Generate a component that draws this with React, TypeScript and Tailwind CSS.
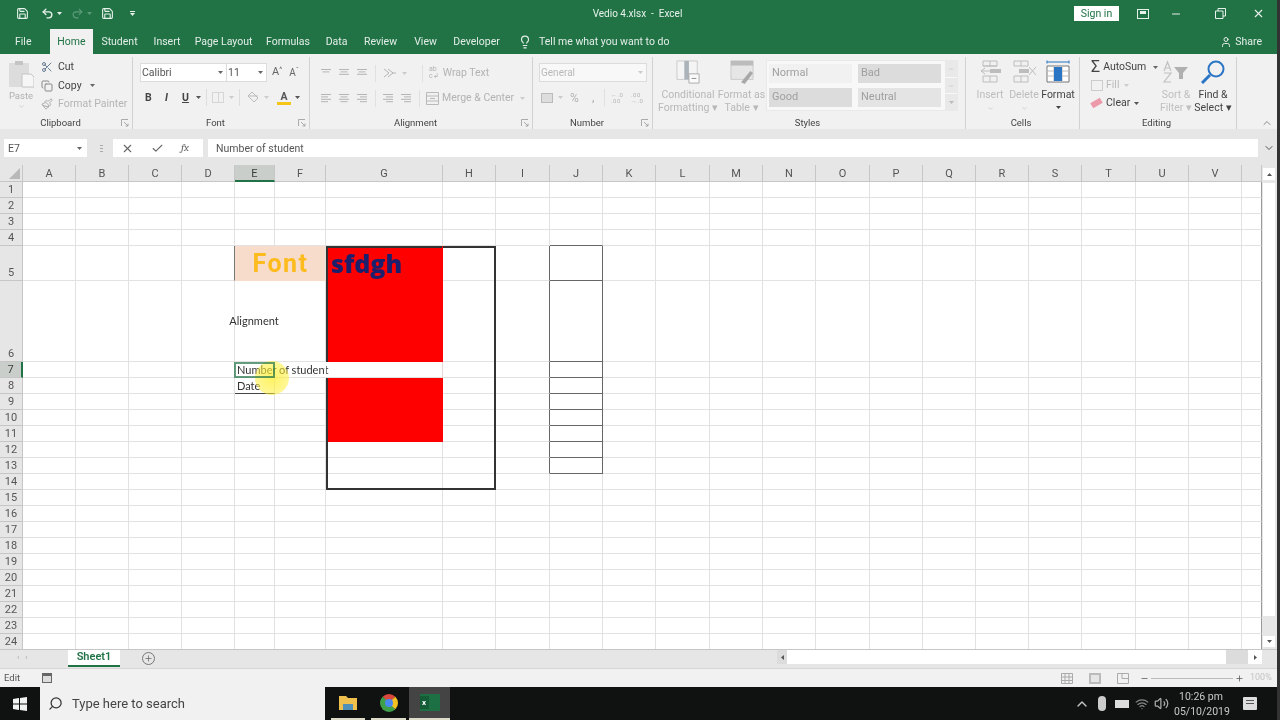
import React from 'react';
import { ChevronDown, ChevronUp, Check, Copy, Lightbulb, Minus, Paintbrush, Plus, Redo2, Save, Scissors, Search, Undo2, User, Volume2, Wifi, X } from 'lucide-react';

const COLS = ['A','B','C','D','E','F','G','H','I','J','K','L','M','N','O','P','Q','R','S','T','U','V','W'];
const ROWS = Array.from({ length: 24 }, (_, i) => i + 1);

const TABS = [
  ['Student', 'w-[33px] ml-[10px]'],
  ['Insert', 'w-[24px] ml-[19px]'],
  ['Page Layout', 'w-[53px] ml-[18px]'],
  ['Formulas', 'w-[40px] ml-[18px]'],
  ['Data', 'w-[21px] ml-[18px]'],
  ['Review', 'w-[31px] ml-[18px]'],
  ['View', 'w-[21px] ml-[19px]'],
  ['Developer', 'w-[45px] ml-[18px]'],
];

const RED_L = 'bg-[#ff0000] border-r-[#ff0000] border-b-0 shadow-[inset_2px_0_0_#333]';
const BOX_L = 'border-b-0 shadow-[inset_2px_0_0_#333,inset_0_-1px_0_#e2e2e2]';
const BOX_R = 'border-r-0 border-b-0 shadow-[inset_-2px_0_0_#333,inset_0_-1px_0_#e2e2e2]';

// per-cell overrides, keyed by address
const CELLS: Record<string, { cls?: string; body?: React.ReactNode }> = {
  D5: { cls: 'border-r-[#777]' },
  E5: { cls: 'relative z-10 bg-[#f8dccb] border-r-[#f8dccb] border-b-[#f8dccb]', body: <span className="block w-[91px] text-center font-['Roboto'] text-[25px] font-bold leading-[36px] tracking-[1.5px] text-[#fdbb1e]">Font</span> },
  F5: { cls: 'bg-[#f8dccb] border-b-[#f8dccb]' },
  G5: { cls: 'bg-[#ff0000] border-r-[#ff0000] border-b-0 shadow-[inset_2px_2px_0_#333]', body: <span className="block pl-[5px] font-['Open_Sans'] text-[25px] font-extrabold leading-[34px] text-[#1c1f6b]">sfdgh</span> },
  H5: { cls: 'border-r-0 border-b-0 shadow-[inset_-2px_2px_0_#333,inset_0_-1px_0_#e2e2e2]' },
  E6: { cls: 'border-r-white', body: <span className="flex h-full w-[38px] items-center justify-center whitespace-nowrap pt-[1px]">Alignment</span> },
  G6: { cls: RED_L },
  H6: { cls: BOX_R },
  E7: { cls: 'border-r-white', body: <span className="block whitespace-nowrap pl-[2px] leading-[15px]">Number of student</span> },
  F7: { cls: 'border-r-white' },
  G7: { cls: 'border-r-[#e8d8d8]' },
  H7: { cls: BOX_R },
  E8: { cls: 'border-b-[#444]', body: <span className="block whitespace-nowrap pl-[2px] leading-[15px]">Date</span> },
  G14: { cls: 'border-r-0 border-b-0 shadow-[inset_2px_-2px_0_#333,inset_-1px_0_0_#e2e2e2]' },
  H14: { cls: 'border-r-0 border-b-0 shadow-[inset_-2px_-2px_0_#333]' },
};
[8, 9, 10, 11].forEach((r) => { CELLS[`G${r}`] = { cls: RED_L }; });
[12, 13].forEach((r) => { CELLS[`G${r}`] = { cls: BOX_L }; });
[8, 9, 10, 11, 12, 13].forEach((r) => { CELLS[`H${r}`] = { cls: BOX_R }; });
[5, 6, 7, 8, 9, 10, 11, 12, 13].forEach((r) => {
  CELLS[`I${r}`] = { cls: 'border-r-[#666]' };
  CELLS[`J${r}`] = { cls: 'border-r-[#666] border-b-[#666]' };
});
CELLS.J4 = { cls: 'border-b-[#666]' };

function Launcher() {
  return (
    <svg width="8" height="8" viewBox="0 0 8 8" className="shrink-0 text-[#999]">
      <path d="M0.5 0.5H7M0.5 0.5V7M3 3l4 4M7 4.5V7H4.5" fill="none" stroke="currentColor" strokeWidth="0.8" />
    </svg>
  );
}

function Caret({ cls = 'text-[#999]' }: { cls?: string }) {
  return <svg width="5" height="3" viewBox="0 0 5 3" className={`shrink-0 ${cls}`}><path d="M0 0h5L2.5 3z" fill="currentColor" /></svg>;
}

function Group({ label, launcher, cls, children }: { label: string; launcher?: boolean; cls: string; children: React.ReactNode }) {
  return (
    <div className={`flex h-[72px] shrink-0 flex-col border-r border-[#d2d2d2] ${cls}`}>
      <div className="flex min-h-0 flex-1">{children}</div>
      <div className="flex h-[15px] items-center pr-[3px] pt-[2px] text-[9.5px] leading-none text-[#444]">
        <span className="flex-1 text-center">{label}</span>
        {launcher && <Launcher />}
      </div>
    </div>
  );
}

function Lines({ rows, align }: { rows: number; align: 'l' | 'c' | 'r' }) {
  const widths = [10, 7, 10, 7];
  return (
    <svg width="12" height="10" viewBox="0 0 12 10" className="shrink-0 text-[#b5b5b5]">
      {Array.from({ length: rows }, (_, i) => {
        const w = widths[i];
        const x = align === 'l' ? 1 : align === 'c' ? 6 - w / 2 : 11 - w;
        return <path key={i} d={`M${x} ${1.5 + i * 2.4}h${w}`} stroke="currentColor" strokeWidth="1" />;
      })}
    </svg>
  );
}

function StyleCell({ text, cls }: { text: string; cls: string }) {
  return <div className={`flex h-[19px] w-[83px] items-center pl-[3px] text-[11px] text-[#a0a0a0] ${cls}`}>{text}</div>;
}

function Ribbon() {
  return (
    <div className="flex h-[75px] bg-[#f1f1f1] pt-[3px]">
      <Group label="Clipboard" launcher cls="w-[133px]">
        <div className="flex w-[40px] flex-col items-center pl-[2px] pt-[3px]">
          <svg width="26" height="28" viewBox="0 0 26 28" className="shrink-0">
            <path d="M1 3h20v24H1z" fill="#dcdcdc" />
            <path d="M7 1h8v4H7z" fill="#c4c4c4" />
            <path d="M14 14h9l3 3v10H14z" fill="#f6f6f6" stroke="#c4c4c4" />
          </svg>
          <span className="mt-[1px] text-[9.5px] leading-[14px] text-[#b0b0b0]">Paste</span>
          <ChevronDown size={7} className="text-[#bbb]" />
        </div>
        <div className="flex flex-col pl-[1px] pt-[1px] text-[10.5px] leading-[18.5px] text-[#444]">
          <div className="flex items-center gap-[5px]"><Scissors size={12} className="text-[#6a7d96]" />Cut</div>
          <div className="flex items-center gap-[5px]"><Copy size={12} className="text-[#888]" />Copy<Caret cls="ml-[3px] text-[#666]" /></div>
          <div className="flex items-center gap-[5px] text-[#b5b5b5]"><Paintbrush size={12} className="text-[#aaa]" />Format Painter</div>
        </div>
      </Group>

      <Group label="Font" launcher cls="w-[177px]">
        <div className="flex flex-col pl-[7px] pt-[6px]">
          <div className="flex h-[19px] items-center">
            <div className="flex h-[19px] w-[87px] items-center justify-between border border-[#dcdcdc] bg-white pl-[1px] pr-[3px] text-[10.5px] text-[#555]">Calibri<Caret cls="text-[#666]" /></div>
            <div className="flex h-[19px] w-[40px] items-center justify-between border border-l-0 border-[#dcdcdc] bg-white pl-[1px] pr-[3px] text-[10.5px] text-[#555]">11<Caret cls="text-[#666]" /></div>
            <span className="ml-[5px] text-[11px] text-[#666]">A<sup className="text-[7px]">^</sup></span>
            <span className="ml-[7px] text-[10px] text-[#666]">A<sup className="text-[7px]">ˇ</sup></span>
          </div>
          <div className="mt-[6px] flex h-[19px] items-center text-[10.5px] text-[#444]">
            <span className="ml-[5px] w-[20px] font-bold">B</span>
            <span className="w-[17px] font-bold italic">I</span>
            <span className="w-[14px] font-bold underline">U</span>
            <Caret cls="text-[#555]" />
            <span className="ml-[5px] h-[17px] w-px bg-[#ddd]" />
            <div className="ml-[5px] h-[11px] w-[12px] border border-[#d5d5d5] bg-[linear-gradient(#d5d5d5,#d5d5d5)] bg-[length:1px_100%] bg-center bg-no-repeat" />
            <Caret cls="ml-[5px] text-[#ccc]" />
            <span className="ml-[5px] h-[17px] w-px bg-[#ddd]" />
            <svg width="13" height="13" viewBox="0 0 13 13" className="ml-[6px] text-[#bbb]"><path d="M6 1l6 6-4 4-6-6zM2 5h10" fill="none" stroke="currentColor" /></svg>
            <Caret cls="ml-[5px] text-[#ccc]" />
            <div className="ml-[8px] flex w-[14px] flex-col items-center font-bold leading-[11px] text-[#555]">A<span className="h-[3px] w-[14px] bg-[#f5c518]" /></div>
            <Caret cls="ml-[4px] text-[#555]" />
          </div>
        </div>
      </Group>

      <Group label="Alignment" launcher cls="w-[223px]">
        <div className="flex flex-col pl-[10px] pt-[7px]">
          <div className="flex h-[18px] items-center gap-[6px]">
            <Lines rows={2} align="c" /><Lines rows={3} align="c" /><Lines rows={3} align="c" />
            <span className="ml-[1px] h-[17px] w-px bg-[#e0e0e0]" />
            <svg width="13" height="11" viewBox="0 0 13 11" className="ml-[1px] text-[#b5b5b5]"><path d="M1 1l5 4-5 4M5 1l5 4-5 4M9 5h4" fill="none" stroke="currentColor" /></svg>
            <Caret cls="text-[#ccc]" />
            <span className="ml-[9px] h-[17px] w-px bg-[#e0e0e0]" />
            <span className="flex items-center gap-[4px] text-[10.5px] text-[#b3b3b3]">
              <span className="text-[7px] leading-[7px]">ab<br />c↲</span>Wrap Text
            </span>
          </div>
          <div className="mt-[7px] flex h-[18px] items-center gap-[6px]">
            <Lines rows={4} align="l" /><Lines rows={4} align="c" /><Lines rows={4} align="r" />
            <span className="ml-[1px] h-[17px] w-px bg-[#e0e0e0]" />
            <Lines rows={4} align="r" /><Lines rows={4} align="r" />
            <span className="ml-[1px] h-[17px] w-px bg-[#e0e0e0]" />
            <span className="flex items-center gap-[3px] text-[10.5px] text-[#b3b3b3]">
              <svg width="13" height="13" viewBox="0 0 13 13" className="text-[#b9b9b9]"><path d="M.5.5h12v12H.5zM.5 4h12M.5 9h12M4 6.500h5" fill="none" stroke="currentColor" /></svg>
              Merge &amp; Center<Caret cls="ml-[3px] text-[#ccc]" />
            </span>
          </div>
        </div>
      </Group>

      <Group label="Number" launcher cls="w-[120px]">
        <div className="flex flex-col pl-[6px] pt-[6px]">
          <div className="flex h-[19px] w-[108px] items-center justify-between border border-[#dcdcdc] bg-[#f8f8f8] pl-[1px] pr-[3px] text-[10px] text-[#b8b8b8]">General<Caret cls="text-[#ccc]" /></div>
          <div className="mt-[6px] flex h-[19px] items-center text-[10.5px] text-[#b5b5b5]">
            <span className="ml-[2px] h-[10px] w-[12px] border border-[#bbb] bg-[#ddd]" />
            <Caret cls="ml-[5px] text-[#ccc]" />
            <span className="ml-[7px] w-[22px] text-[12px]">%</span>
            <span className="w-[12px] font-bold">,</span>
            <span className="h-[17px] w-px bg-[#e0e0e0]" />
            <span className="ml-[6px] w-[20px] text-[6px] leading-[6px] tracking-[0.5px]">←.0<br />.00</span>
            <span className="text-[6px] leading-[6px] tracking-[0.5px]">.00<br />→.0</span>
          </div>
        </div>
      </Group>

      <Group label="Styles" cls="w-[313px]">
        <div className="flex w-[63px] flex-col items-center pl-[7px] pt-[3px] text-[10.5px] leading-[13px] text-[#b8b8b8]">
          <svg width="26" height="24" viewBox="0 0 26 26" className="mb-[4px] shrink-0">
            <path d="M1 1h22v20H1z" fill="#f4f4f4" stroke="#c9c9c9" />
            <path d="M9 1h5v20H9z" fill="#aab2ba" />
            <path d="M14 15h11v10H14z" fill="#fafafa" stroke="#a8a8a8" />
            <path d="M17 20h5" stroke="#888" />
          </svg>
          <span className="whitespace-nowrap">Conditional</span>
          <span className="whitespace-nowrap">Formatting ▾</span>
        </div>
        <div className="flex w-[48px] flex-col items-center pl-[3px] pt-[3px] text-[10.5px] leading-[13px] text-[#b8b8b8]">
          <svg width="26" height="24" viewBox="0 0 26 26" className="mb-[4px] shrink-0">
            <path d="M1 1h24v20H1z" fill="#e6e6e6" stroke="#c9c9c9" />
            <path d="M1 1h24v5H1z" fill="#bcbcbc" />
            <path d="M12 24l10-12 3 2-9 12z" fill="#a8a8a8" />
          </svg>
          <span className="whitespace-nowrap">Format as</span>
          <span className="whitespace-nowrap">Table ▾</span>
        </div>
        <div className="my-[3px] ml-[2px] flex h-[51px] border border-[#e9e9e9] bg-[#f8f8f8]">
          <div className="grid w-[178px] grid-cols-[83px_83px] content-start gap-x-[6px] gap-y-[5px] pl-[2px] pt-[3px]">
            <StyleCell text="Normal" cls="bg-[#f1f1f1]" />
            <StyleCell text="Bad" cls="bg-[#dcdcdc]" />
            <StyleCell text="Good" cls="bg-[#dcdcdc]" />
            <StyleCell text="Neutral" cls="bg-[#e4e4e4]" />
          </div>
          <div className="flex w-[12px] flex-col divide-y divide-[#f8f8f8] bg-[#e9e9e9]">
            <div className="flex flex-1 items-center justify-center"><Minus size={6} className="text-[#bbb]" /></div>
            <div className="flex flex-1 items-center justify-center"><Minus size={6} className="text-[#bbb]" /></div>
            <div className="flex flex-1 items-center justify-center"><Caret cls="text-[#bbb]" /></div>
          </div>
        </div>
      </Group>

      <Group label="Cells" cls="w-[114px]">
        <div className="flex w-full pl-[6px] pt-[3px] text-center text-[10.5px] leading-[13px]">
          <div className="ml-[1px] flex w-[34px] flex-col items-center text-[#bdbdbd]">
            <svg width="26" height="24" viewBox="0 0 26 24" className="mb-[4px] shrink-0"><path d="M6 1h14v5H6zM6 6h14M6 16h14v6H6zM13 1v5M13 16v6M20 11H4M8 8l-4 3 4 3" fill="none" stroke="currentColor" /><path d="M13 9h11v4H13z" fill="currentColor" /></svg>
            <span>Insert</span><ChevronDown size={7} className="mt-[4px]" />
          </div>
          <div className="flex w-[34px] flex-col items-center text-[#bdbdbd]">
            <svg width="26" height="24" viewBox="0 0 26 24" className="mb-[4px] shrink-0"><path d="M3 1h14v5H3zM3 16h14v6H3zM10 1v5M10 16v6M18 7l7 8M25 7l-7 8" fill="none" stroke="currentColor" /><path d="M8 9h10v4H8z" fill="currentColor" /></svg>
            <span>Delete</span><ChevronDown size={7} className="mt-[4px]" />
          </div>
          <div className="flex w-[34px] flex-col items-center text-[#444]">
            <svg width="26" height="24" viewBox="0 0 26 24" className="mb-[4px] shrink-0">
              <path d="M2 6h22v16H2z" fill="#fff" stroke="#777" />
              <path d="M9 6v16M17 6v16M2 11h22M2 16h22" stroke="#bbb" />
              <path d="M9 7h8v14H9z" fill="#2a75c4" />
              <path d="M2 2h22M2 .5v3M24 .5v3" stroke="#2a75c4" />
            </svg>
            <span>Format</span><Caret cls="mt-[5px] text-[#444]" />
          </div>
        </div>
      </Group>

      <Group label="Editing" cls="w-[157px]">
        <div className="flex w-full text-[10.5px] leading-[18px]">
          <div className="flex w-[78px] flex-col pl-[11px] pt-[1px]">
            <div className="flex items-center gap-[3px] text-[#444]"><span className="text-[16px] leading-none">Σ</span>AutoSum<Caret cls="ml-[4px] text-[#666]" /></div>
            <div className="flex items-center gap-[3px] text-[#bbb]"><span className="h-[11px] w-[12px] border border-[#ccc]" />Fill<Caret cls="ml-[2px] text-[#ccc]" /></div>
            <div className="flex items-center gap-[4px] text-[#444]"><span className="h-[6px] w-[11px] -rotate-30 bg-[#ec9aaa]" />Clear<Caret cls="text-[#555]" /></div>
          </div>
          <div className="flex w-[36px] flex-col items-center pt-[3px] leading-[13px] text-[#c0c0c0]">
            <svg width="26" height="24" viewBox="0 0 26 24" className="mb-[4px] shrink-0">
              <path d="M1 11L4.500 2 8 11M2.500 8h4M1 13h7L1 22h7" fill="none" stroke="currentColor" strokeWidth="1.2" />
              <path d="M11 7h14l-5 6v6h-4v-6z" fill="#b0b0b0" />
            </svg>
            <span className="whitespace-nowrap">Sort &amp;</span>
            <span className="whitespace-nowrap">Filter ▾</span>
          </div>
          <div className="ml-[1px] flex w-[36px] flex-col items-center pt-[3px] leading-[13px] text-[#444]">
            <svg width="26" height="24" viewBox="0 0 26 24" className="mb-[4px] shrink-0 text-[#2a75c4]"><circle cx="16" cy="9" r="7.500" fill="none" stroke="currentColor" strokeWidth="2" /><path d="M10 15L2 23" stroke="currentColor" strokeWidth="3" /></svg>
            <span className="whitespace-nowrap">Find &amp;</span>
            <span className="whitespace-nowrap">Select ▾</span>
          </div>
        </div>
      </Group>

      <div className="flex flex-1 items-end justify-center pl-[16px] text-[#888]"><ChevronUp size={12} /></div>
    </div>
  );
}

function Sheet() {
  return (
    <div className="grid min-w-0 flex-1 grid-cols-[23px_53px_53px_53px_53px_40px_51px_117px_53px_54px_53px_53px_54px_53px_53px_54px_53px_53px_53px_53px_54px_53px_53px_1fr] grid-rows-[17px_repeat(4,16px)_35px_81px_repeat(18,16px)] overflow-hidden bg-white font-['Lato'] text-[11px] text-[#333]">
      <div className="flex items-end justify-end border-b border-r border-[#c6c6c6] bg-[#e6e6e6] p-[2px]">
        <svg width="11" height="11" viewBox="0 0 11 11"><path d="M11 0v11H0z" fill="#b8b8b8" /></svg>
      </div>
      {COLS.map((c) => (
        <div key={c} className={c === 'E' ? 'border-b-2 border-r border-b-[#217346] border-r-[#c6c6c6] bg-[#c9cecb] text-center font-["Roboto"] text-[11px] leading-[17px] text-[#3c3c3c]' : 'border-b border-r border-[#c6c6c6] bg-[#e6e6e6] text-center font-["Roboto"] text-[11px] leading-[17px] text-[#555]'}>
          {c === 'W' ? '' : c}
        </div>
      ))}
      {ROWS.map((r) => (
        <React.Fragment key={r}>
          <div className={r === 7 ? 'flex items-end justify-center border-r-2 border-b border-r-[#217346] border-b-[#c6c6c6] bg-[#c9cecb] font-["Roboto"] leading-[14px] text-[#3c3c3c]' : 'flex items-end justify-center border-b border-r border-[#c6c6c6] bg-[#e6e6e6] font-["Roboto"] leading-[14px] text-[#555]'}>{r}</div>
          {COLS.map((c) => {
            const cell = CELLS[`${c}${r}`];
            return (
              <div key={c} className={`min-w-0 border-b border-r border-[#e2e2e2] ${c === 'W' ? 'border-r-[#999]' : ''} ${cell?.cls ?? ''}`}>
                {cell?.body}
              </div>
            );
          })}
        </React.Fragment>
      ))}
    </div>
  );
}

function Taskbar() {
  return (
    <div className="flex h-[33px] items-stretch bg-[#101211] text-[#ddd]">
      <div className="flex w-[40px] items-center justify-center">
        <svg width="14" height="14" viewBox="0 0 14 14"><path d="M0 2l6-.9V6.6H0zM7 1l7-1v6.6H7zM0 7.4h6v5.6l-6-.9zM7 7.4h7V14l-7-1z" fill="#f2f2f2" /></svg>
      </div>
      <div className="flex w-[285px] items-center gap-[9px] bg-[#f1f1f1] pl-[8px] text-[13px] text-[#444]">
        <Search size={15} className="-scale-x-100 text-[#333]" />Type here to search
      </div>
      <div className="ml-[6px] mr-[6px] flex w-[34px] items-center justify-center border-b-2 border-[#dcdcc8]">
        <svg width="20" height="16" viewBox="0 0 20 16"><path d="M1 1h7l2 2h9v12H1z" fill="#f0c04e" /><path d="M5 9h10v6H5z" fill="#4f8fb8" /></svg>
      </div>
      <div className="mr-[3px] flex w-[35px] items-center justify-center border-b-2 border-[#dcdcc8]">
        <div className="h-[18px] w-[18px] rounded-full border-[5px] border-[#3fa04a] border-t-[#d9483b] border-r-[#f3c122] bg-[#4a8af0]" />
      </div>
      <div className="flex w-[41px] items-center justify-center border-b-2 border-[#dcdcc8] bg-[#444]">
        <div className="flex h-[17px] w-[20px] items-center bg-[#1d7044]"><span className="flex h-[13px] w-[9px] items-center justify-center bg-[#135c36] text-[8px] font-bold leading-none text-white">x</span></div>
      </div>
      <div className="flex-1" />
      <div className="flex items-center text-[#c8c8c8]">
        <ChevronUp size={16} className="mr-[8px]" />
        <div className="mr-[9px] h-[15px] w-[8px] rounded-sm bg-[#ccc]" />
        <div className="mr-[6px] h-[8px] w-[14px] bg-[#ddd]" />
        <Wifi size={14} className="mr-[5px] text-[#888]" />
        <Volume2 size={15} className="mr-[5px] text-[#aaa]" />
        <div className="mr-[15px] w-[54px] text-center text-[10.5px] leading-[15px]">10:26 pm<br />05/10/2019</div>
        <div className="mr-[23px] flex h-[13px] w-[14px] flex-col gap-[2px] rounded-[1px] bg-[#ddd] p-[3px]"><span className="h-px bg-[#555]" /><span className="h-px bg-[#555]" /></div>
      </div>
    </div>
  );
}

export default function App() {
  return (
    <div className="relative flex h-[720px] w-[1280px] flex-col overflow-hidden bg-white font-['Roboto'] blur-[0.35px]">
      {/* title bar */}
      <div className="flex h-[27px] items-center bg-[#217346] text-[#e8f2ec]">
        <div className="flex w-[140px] items-center pl-[16px]">
          <Save size={13} />
          <Undo2 size={13} className="ml-[12px]" strokeWidth={2.5} />
          <Caret cls="ml-[3px] text-[#e8f2ec]" />
          <Redo2 size={13} className="ml-[9px] text-[#5c9c7a]" />
          <Caret cls="ml-[3px] text-[#5c9c7a]" />
          <Save size={13} className="ml-[9px]" />
          <span className="ml-[16px] flex flex-col items-center gap-[1px]"><span className="h-px w-[5px] bg-[#e8f2ec]" /><Caret cls="text-[#e8f2ec]" /></span>
        </div>
        <div className="flex-1 pl-[61px] text-center text-[10px]">Vedio 4.xlsx&nbsp; -&nbsp; Excel</div>
        <div className="flex w-[206px] items-center">
          <span className="flex h-[15px] w-[45px] items-center justify-center bg-white text-[10.5px] text-[#217346]">Sign in</span>
          <svg width="12" height="10" viewBox="0 0 12 10" className="ml-[18px]"><rect x=".5" y=".5" width="11" height="9" fill="none" stroke="currentColor" /><path d="M3 2h6v3H3z" fill="currentColor" /></svg>
          <Minus size={12} className="ml-[21px]" />
          <svg width="11" height="11" viewBox="0 0 11 11" className="ml-[33px]"><path d="M3 3V.5h7.500V8H8M.5 3H8v7.500H.5z" fill="none" stroke="currentColor" /></svg>
          <X size={13} className="ml-[26px]" />
        </div>
      </div>

      {/* ribbon tabs */}
      <div className="flex h-[27px] items-stretch bg-[#217346] pt-[2px] text-[10.5px] text-[#e3eee8]">
        <span className="ml-[15px] w-[35px] self-center">File</span>
        <span className="flex w-[43px] items-center justify-center bg-[#f1f1f1] text-[#217346]">Home</span>
        {TABS.map(([name, cls]) => (
          <span key={name} className={`flex items-center justify-center whitespace-nowrap ${cls}`}>{name}</span>
        ))}
        <Lightbulb size={14} className="ml-[19px] self-center" />
        <span className="ml-[7px] self-center whitespace-nowrap">Tell me what you want to do</span>
        <div className="flex-1" />
        <span className="mr-[18px] flex items-center gap-[3px]"><User size={12} />Share</span>
      </div>

      <Ribbon />

      {/* formula bar */}
      <div className="flex h-[36px] items-start bg-[#e6e6e6] pt-[10px] text-[10.5px] text-[#555]">
        <div className="ml-[4px] flex h-[18px] w-[83px] items-center justify-between bg-white pl-[4px] pr-[5px] pt-[1px]">E7<Caret cls="text-[#666]" /></div>
        <div className="ml-[13px] flex h-[18px] w-[3px] flex-col justify-center gap-[2px]"><span className="h-px bg-[#aaa]" /><span className="h-px bg-[#aaa]" /><span className="h-px bg-[#aaa]" /></div>
        <div className="ml-[10px] flex h-[18px] w-[90px] items-center bg-white text-[#666]">
          <X size={13} className="ml-[8px]" /><Check size={13} className="ml-[17px]" /><span className="ml-[17px] font-serif text-[11px] italic">fx</span>
        </div>
        <div className="ml-[5px] flex h-[18px] flex-1 items-center bg-white pl-[8px] pt-[1px]">Number of student</div>
        <div className="flex h-[18px] w-[22px] items-center justify-center"><ChevronDown size={12} /></div>
      </div>

      {/* sheet and scrollbar */}
      <div className="relative flex h-[484px]">
        <Sheet />
        <div className="flex w-[18px] shrink-0 flex-col bg-[#e6e6e6] pl-[1px] pr-[5px]">
          <div className="mt-[3px] flex h-[12px] w-full items-center justify-center bg-white"><Caret cls="rotate-180 text-[#555]" /></div>
          <div className="mt-[3px] h-[433px] w-full bg-white" />
          <div className="flex-1" />
          <div className="mb-[2px] flex h-[11px] w-full items-center justify-center bg-white"><Caret cls="text-[#555]" /></div>
        </div>
        <div className="absolute left-[255px] top-[196px] h-[34px] w-[34px] rounded-full bg-[radial-gradient(circle,#ffef30c0,#ffef3080_70%,#ffef3000)]" />
        <div className="absolute left-[234px] top-[197px] h-[16px] w-[41px] border-2 border-[#217346]/70" />
      </div>

      {/* sheet tabs */}
      <div className="flex h-[19px] items-start border-t border-[#c6c6c6] bg-[#e6e6e6] text-[#aaa]">
        <span className="ml-[17px] w-[51px] text-[8px] leading-[16px]">‹ &nbsp;&nbsp;›</span>
        <span className="flex h-[17px] w-[52px] items-center justify-center border-b-2 border-[#217346] bg-white text-[11px] font-semibold text-[#217346]">Sheet1</span>
        <span className="ml-[22px] mt-[2px] flex h-[13px] w-[13px] items-center justify-center rounded-full border border-[#777] text-[#666]"><Plus size={9} /></span>
        <div className="flex-1" />
        <div className="mr-[18px] flex h-[14px] w-[485px] items-center bg-[#dcdcdc]">
          <span className="flex h-full w-[10px] items-center justify-center"><Caret cls="rotate-90 text-[#555]" /></span>
          <div className="h-full w-[439px] bg-white" />
          <div className="flex-1" />
          <span className="flex h-full w-[14px] items-center justify-center bg-white"><Caret cls="-rotate-90 text-[#555]" /></span>
        </div>
      </div>

      {/* status bar */}
      <div className="flex h-[19px] items-center border-t border-[#d6d6d6] bg-[#f1f1f1] text-[9.5px] text-[#555]">
        <span className="ml-[4px] w-[38px]">Edit</span>
        <div className="h-[10px] w-[10px] border border-t-[3px] border-[#666] bg-[#ddd]" />
        <div className="flex-1" />
        <svg width="12" height="11" viewBox="0 0 12 11" className="text-[#aaa]"><path d="M.5.5h11v10H.5zM4 .5v10M8 .5v10M.5 4h11M.5 7.500h11" fill="none" stroke="currentColor" /></svg>
        <div className="ml-[16px] h-[11px] w-[12px] border-2 border-[#bbb] bg-[#e6e6e6]" />
        <svg width="12" height="11" viewBox="0 0 12 11" className="ml-[16px] text-[#aaa]"><path d="M.5.5h11v10H.5zM5 .5v5h6.500" fill="none" stroke="currentColor" /></svg>
        <Minus size={9} className="ml-[11px]" />
        <div className="mx-[2px] h-px w-[82px] bg-[#bbb]" />
        <Plus size={9} />
        <span className="ml-[6px] mr-[8px] w-[22px] text-[9px] text-[#c4c4c4]">100%</span>
      </div>

      <Taskbar />

      {/* dark edge of the recording on the right */}
      <div className="absolute right-0 top-0 h-full w-[3px] bg-[#333]" />
    </div>
  );
}
